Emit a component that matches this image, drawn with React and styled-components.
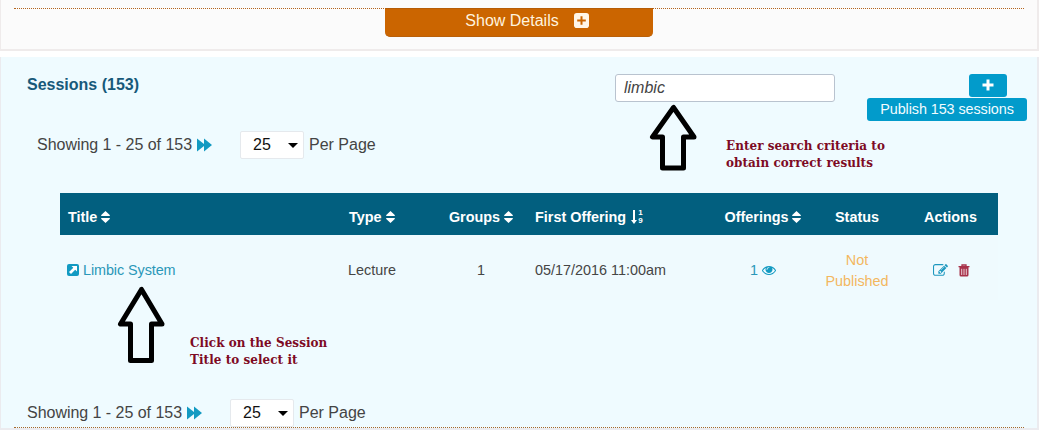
import React from "react";
import styled, { createGlobalStyle } from "styled-components";

const Global = createGlobalStyle`
  * { box-sizing: border-box; }
  body { margin: 0; background: #fff; font-family: "Liberation Sans", Arial, sans-serif; font-size: 16px; color: #454545; overflow: hidden; }
  svg { display: block; flex: none; }
`;

const Page = styled.main`
  position: relative;
  width: 1039px;
  height: 444px;
`;

const DetailsPanel = styled.section`
  height: 51px;
  padding: 8px 13px 0;
  background: #fbfbfb;
  border: solid #efebeb;
  border-width: 0 2px 2px 1px;
`;

const DottedRule = styled.div`
  border-top: 1px dotted #b5651d;
  display: flex;
  justify-content: center;
`;

const DetailsButton = styled.button`
  width: 268px;
  height: 29px;
  margin: -1px 1px 0 0;
  padding: 0 16px 4px 33px;
  border: 0;
  border-top: 1px solid #b65c05;
  border-bottom: 1px solid #b9600a;
  border-radius: 0 0 5px 5px;
  background: #cb6500;
  color: #fff3df;
  font: 16px "Liberation Sans", sans-serif;
  display: flex;
  align-items: center;
  justify-content: center;
  gap: 15px;
`;

const SessionsPanel = styled.section`
  margin-top: 6px;
  height: 373px;
  background: #effbff;
  border: solid #ebebef;
  border-width: 0 2px 2px 1px;
  display: flex;
  flex-direction: column;
`;

const PanelHeader = styled.header`
  height: 74px;
  padding: 17px 10px 0 26px;
  display: flex;
  align-items: flex-start;
`;

const Heading = styled.h2`
  margin: 1px 0 0;
  width: 588px;
  font-size: 16px;
  line-height: 20px;
  font-weight: bold;
  color: #17597a;
`;

const SearchInput = styled.input`
  width: 220px;
  height: 28px;
  padding: 0 8px 1px;
  border: 1px solid #b9c3cf;
  border-radius: 3px;
  background: #fff;
  color: #444;
  font: italic 16px "Liberation Sans", sans-serif;
`;

const HeaderActions = styled.div`
  margin-left: auto;
  display: flex;
  flex-direction: column;
  align-items: flex-end;
  gap: 1px;
`;

const ActionButton = styled.button`
  width: ${(p) => p.$width}px;
  height: 23px;
  margin-right: ${(p) => p.$inset || 0}px;
  padding: 0 0 1px;
  border: 0;
  border-radius: 3px;
  background: #029bcb;
  color: #f2fcff;
  font: 14.4px "Liberation Sans", sans-serif;
  letter-spacing: -0.08px;
  display: flex;
  align-items: center;
  justify-content: center;
`;

const PagerRow = styled.div`
  height: 28px;
  padding-left: ${(p) => p.$indent}px;
  display: flex;
  align-items: center;
  color: #444;
`;

const PagerText = styled.span`
  width: 160px;
  white-space: nowrap;
  letter-spacing: -0.03px;
`;

const PageSize = styled.div`
  width: 64px;
  height: 28px;
  margin: 0 5px 0 28px;
  padding: 0 5px 0 12px;
  background: #fff;
  border: 1px solid #e5e9ed;
  border-radius: 2px;
  color: #111;
  display: flex;
  align-items: center;
  justify-content: space-between;
`;

const Table = styled.div`
  width: 938px;
  margin: 34px 0 0 59px;
  height: 107px;
  font-size: 14.4px;
  display: flex;
  flex-direction: column;
`;

const Row = styled.div`
  display: grid;
  grid-template-columns: 281px 93px 93px 182px 108px 80px 101px;
  align-items: center;
`;

const HeadRow = styled(Row)`
  height: 42px;
  padding-top: 6px;
  background: #025f7f;
  color: #fff;
  font-weight: bold;
`;

const BodyRow = styled(Row)`
  height: 65px;
  padding-top: 5px;
  background: #effafe;
`;

const Cell = styled.div`
  display: flex;
  align-items: center;
  justify-content: ${(p) => (p.$center ? "center" : "flex-start")};
  gap: ${(p) => p.$gap ?? 4}px;
  padding-left: ${(p) => p.$indent ?? (p.$center ? 0 : 8)}px;
  white-space: nowrap;
`;

const SessionLink = styled.a`
  display: flex;
  align-items: center;
  gap: 4px;
  color: #2a97b8;
  letter-spacing: -0.08px;
`;

const Status = styled.span`
  padding-top: 1px;
  line-height: 21px;
  text-align: center;
  color: #f3b75e;
`;

const Note = styled.p`
  position: absolute;
  left: ${(p) => p.$x}px;
  top: ${(p) => p.$y}px;
  margin: 0;
  color: #7d0a24;
  font: bold 13.3px/17px "DejaVu Serif Condensed", "DejaVu Serif", serif;
  letter-spacing: 0.06px;
  white-space: pre;
`;

const ArrowMark = styled.svg`
  position: absolute;
  left: ${(p) => p.$x}px;
  top: ${(p) => p.$y}px;
`;

const BottomRule = styled.div`
  margin: 0 13px;
  border-top: 1px dotted #a5692c;
`;

const Arrow = ({ x, y, head, shaft }) => (
  <ArrowMark $x={x} $y={y} width="50" height="82" fill="none" stroke="#000" strokeWidth="5" strokeLinejoin="round">
    <path d={`M25.5 4.5 L4.5 ${head} H14.5 V${head + shaft} H35.5 V${head} H46 Z`} />
  </ArrowMark>
);

const FaGlyph = ({ size = 14, color = "currentColor", d }) => (
  <svg width={size} height={size} viewBox="0 0 1792 1792" fill={color}>
    <path d={d} />
  </svg>
);

const EYE = "M1664 960q-152-236-381-353 61 104 61 225 0 185-131.5 316.5t-316.5 131.5-316.5-131.5-131.5-316.5q0-121 61-225-229 117-381 353 133 205 333.5 326.5t434.5 121.5 434.5-121.5 333.5-326.5zm-720-384q0-20-14-34t-34-14q-125 0-214.5 89.5t-89.5 214.5q0 20 14 34t34 14 34-14 14-34q0-86 61-147t147-61q20 0 34-14t14-34zm848 384q0 34-20 69-140 230-376.5 368.5t-499.5 138.5-499.5-139-376.5-368q-20-35-20-69t20-69q140-229 376.5-368t499.5-139 499.5 139 376.5 368q20 35 20 69z";
const EDIT = "M888 1184l116-116-152-152-116 116v56h96v96h56zm440-720q-16-16-33 1l-350 350q-17 17-1 33t33-1l350-350q17-17 1-33zm80 594v190q0 119-84.5 203.5t-203.5 84.5h-832q-119 0-203.5-84.5t-84.5-203.5v-832q0-119 84.5-203.5t203.5-84.5h832q63 0 117 25 15 7 18 23 3 17-9 29l-49 49q-14 14-32 8-23-6-45-6h-832q-66 0-113 47t-47 113v832q0 66 47 113t113 47h832q66 0 113-47t47-113v-126q0-13 9-22l64-64q15-15 35-7t20 29zm-96-738l288 288-672 672h-288v-288zm444 132l-92 92-288-288 92-92q28-28 68-28t68 28l152 152q28 28 28 68t-28 68z";

const TrashIcon = () => (
  <svg width="12" height="13" viewBox="0 0 12 13">
    <path d="M.5 2.7H11.5M4 2.5V1H8V2.5" fill="none" stroke="#a8324a" strokeWidth="1.3" />
    <path d="M1.5 3H10.5V11Q10.5 12.5 9 12.5H3Q1.5 12.5 1.5 11Z" fill="#a8324a" />
    <path d="M3.7 4.8V11M6 4.8V11M8.3 4.8V11" stroke="#f4dfe6" strokeWidth=".9" />
  </svg>
);

const SortIcon = () => (
  <svg width="9" height="12" viewBox="0 0 9 12" fill="#fff">
    <path d="M4.5 0 L9 4.2 Q9 5 8.2 5 H.8 Q0 5 0 4.2Z M0 7.8 Q0 7 .8 7 H8.2 Q9 7 9 7.8 L4.5 12Z" />
  </svg>
);

const NumericWrap = styled.span`
  display: flex;
  align-items: center;
  gap: 1px;
  margin-left: 1px;
`;

const NumericStack = styled.span`
  display: flex;
  flex-direction: column;
  font-size: 8px;
  line-height: 8px;
`;

const NumericSort = () => (
  <NumericWrap>
    <svg width="6" height="14" viewBox="0 0 6 14" fill="#fff">
      <path d="M2 0H4V10H6L3 14 0 10H2Z" />
    </svg>
    <NumericStack>
      <span>1</span>
      <span>9</span>
    </NumericStack>
  </NumericWrap>
);

const Pager = ({ indent }) => (
  <PagerRow $indent={indent}>
    <PagerText>Showing 1 - 25 of 153</PagerText>
    <svg width="15" height="14" viewBox="0 0 15 14" fill="#129ac2">
      <path d="M0 .5 7 6V.5L15 7 7 13.5V8L0 13.5Z" />
    </svg>
    <PageSize>
      25
      <svg width="10" height="5" viewBox="0 0 10 5">
        <path d="M0 0H10L5 5Z" />
      </svg>
    </PageSize>
    Per Page
  </PagerRow>
);

const Spacer = styled.div`
  flex: 1;
`;

export default function App() {
  return (
    <Page>
      <Global />
      <DetailsPanel>
        <DottedRule>
          <DetailsButton>
            Show Details
            <svg width="15" height="15" viewBox="0 0 15 15">
              <rect width="15" height="15" rx="2.8" fill="#fff6e8" />
              <path d="M7.5 3.2V11.8M3.2 7.5H11.8" stroke="#cb6500" strokeWidth="2" />
            </svg>
          </DetailsButton>
        </DottedRule>
      </DetailsPanel>

      <SessionsPanel>
        <PanelHeader>
          <Heading>Sessions (153)</Heading>
          <SearchInput defaultValue="limbic" />
          <HeaderActions>
            <ActionButton $width={38} $inset={20} aria-label="Add session">
              <svg width="12" height="12" viewBox="0 0 12 12">
                <path d="M6 .5V11.5M.5 6H11.5" stroke="#fff" strokeWidth="3" />
              </svg>
            </ActionButton>
            <ActionButton $width={160}>Publish 153 sessions</ActionButton>
          </HeaderActions>
        </PanelHeader>

        <Pager indent={36} />

        <Table>
          <HeadRow>
            <Cell>Title <SortIcon /></Cell>
            <Cell>Type <SortIcon /></Cell>
            <Cell $center $indent={1}>Groups <SortIcon /></Cell>
            <Cell>First Offering <NumericSort /></Cell>
            <Cell $center>Offerings <SortIcon /></Cell>
            <Cell $center>Status</Cell>
            <Cell $center $indent={6}>Actions</Cell>
          </HeadRow>
          <BodyRow>
            <Cell $indent={7}>
              <SessionLink>
                <svg width="12" height="12" viewBox="0 0 12 12">
                  <rect width="12" height="12" rx="2" fill="#129ac2" />
                  <path d="M4.5 2H10V7.5L8.2 5.7 4 10 2 8 6.3 3.8Z" fill="#fff" />
                </svg>
                Limbic System
              </SessionLink>
            </Cell>
            <Cell $indent={7}>Lecture</Cell>
            <Cell $center $indent={1}>1</Cell>
            <Cell>05/17/2016 11:00am</Cell>
            <Cell $center>
              <SessionLink>1 <FaGlyph d={EYE} color="#129ac2" /></SessionLink>
            </Cell>
            <Cell $center><Status>Not<br />Published</Status></Cell>
            <Cell $center $gap={10} $indent={7}>
              <FaGlyph d={EDIT} size={15} color="#1e98bf" />
              <TrashIcon />
            </Cell>
          </BodyRow>
        </Table>

        <Spacer />
        <Pager indent={26} />
        <BottomRule />
      </SessionsPanel>

      <Arrow x={648} y={103} head={34} shaft={31} />
      <Arrow x={116} y={285} head={39} shaft={36.5} />
      <Note $x={726} $y={137}>{"Enter search criteria to\nobtain correct results"}</Note>
      <Note $x={190} $y={334}>{"Click on the Session\nTitle to select it"}</Note>
    </Page>
  );
}
